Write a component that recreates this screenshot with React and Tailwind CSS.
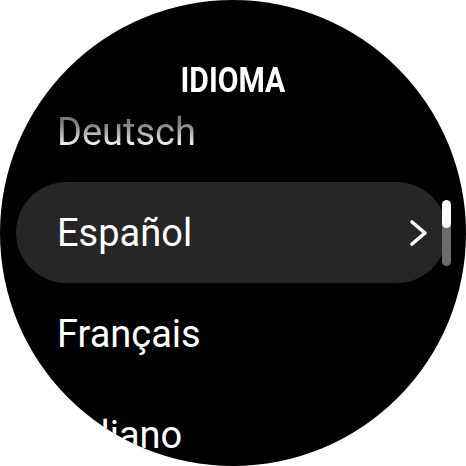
import React from "react";

const languages = [
  { name: "Deutsch", state: "faded" },
  { name: "Español", state: "active" },
  { name: "Français", state: "normal" },
  { name: "Italiano", state: "normal" },
];

const Chevron = () => (
  <svg width="22" height="28" viewBox="0 0 22 28" fill="none">
    <path
      d="M4 3 L17 14 L4 25"
      stroke="white"
      strokeWidth="3.6"
      strokeLinecap="round"
      strokeLinejoin="round"
    />
  </svg>
);

const LanguageRow = ({ lang }) => {
  if (lang.state === "active") {
    return (
      <div className="h-[101px] mx-[16px] mr-[19px] rounded-full bg-[#262626] flex items-center pl-[41px] pr-[17px]">
        <span className="flex-1 text-white text-[38px] leading-none">{lang.name}</span>
        <Chevron />
      </div>
    );
  }
  return (
    <div className="h-[101px] flex items-center pl-[57px]">
      <span
        className={
          lang.state === "faded"
            ? "inline-block text-[38px] leading-[30px] py-[4px] bg-linear-to-b from-[#7a7a7a] from-25% to-[#f6f6f6] to-85% bg-clip-text text-transparent"
            : "text-[38px] leading-none text-white"
        }
      >
        {lang.name}
      </span>
    </div>
  );
};

export default function App() {
  return (
    <div className="w-[466px] h-[466px] bg-white" style={{ fontFamily: "Roboto, 'Noto Sans', sans-serif" }}>
      <div className="relative w-[466px] h-[466px] rounded-full bg-black overflow-hidden">
        <div className="h-[81px] flex justify-center pt-[65px]">
          <span className="inline-block text-white font-bold text-[35px] leading-[32px] h-[32px] scale-x-[0.86]">
            IDIOMA
          </span>
        </div>
        <div className="flex flex-col">
          {languages.map((lang) => (
            <LanguageRow key={lang.name} lang={lang} />
          ))}
        </div>
        <div className="absolute left-[442px] top-[200px] w-[9px] h-[66px] rounded-full bg-[#6b6b6b] overflow-hidden">
          <div className="h-[28px] rounded-full bg-white" />
        </div>
      </div>
    </div>
  );
}
